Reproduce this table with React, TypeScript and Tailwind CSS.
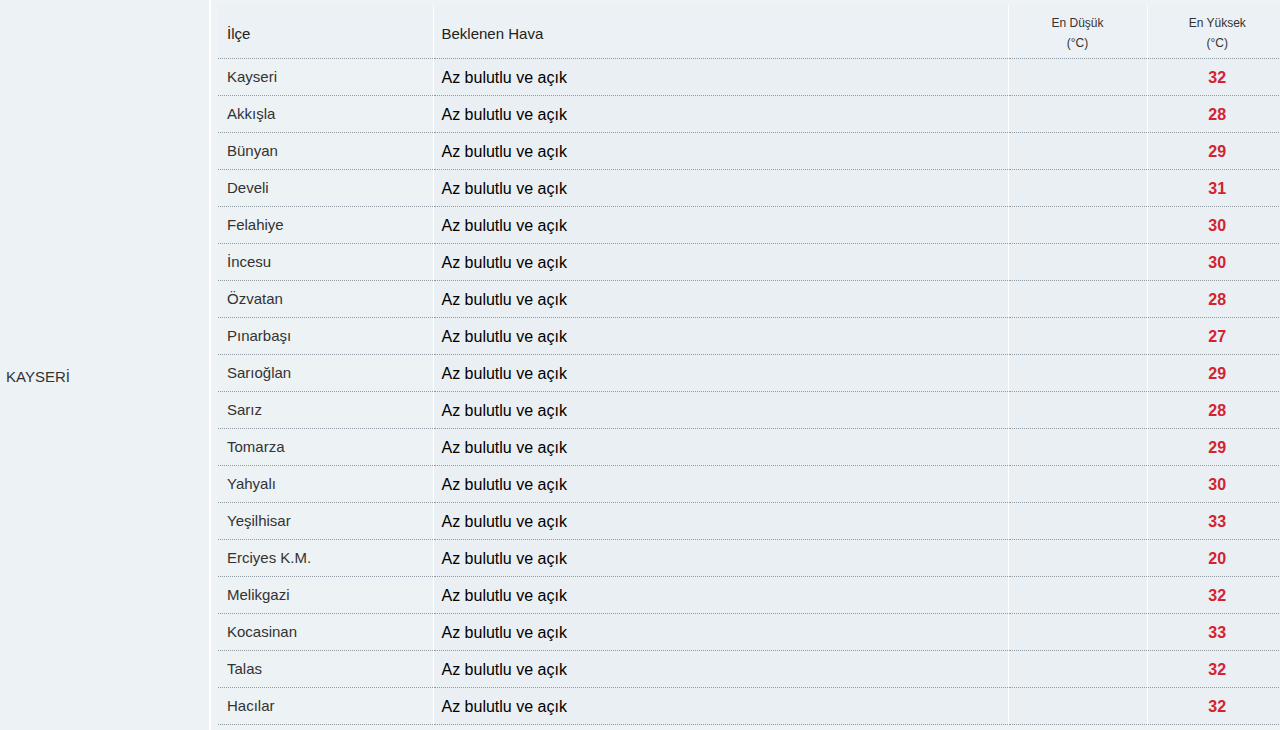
import React from 'react'

const rows: [string, number][] = [
  ['Kayseri', 32],
  ['Akkışla', 28],
  ['Bünyan', 29],
  ['Develi', 31],
  ['Felahiye', 30],
  ['İncesu', 30],
  ['Özvatan', 28],
  ['Pınarbaşı', 27],
  ['Sarıoğlan', 29],
  ['Sarız', 28],
  ['Tomarza', 29],
  ['Yahyalı', 30],
  ['Yeşilhisar', 33],
  ['Erciyes K.M.', 20],
  ['Melikgazi', 32],
  ['Kocasinan', 33],
  ['Talas', 32],
  ['Hacılar', 32],
]

export default function App() {
  return (
    <div className="flex h-[730px] w-[1280px] overflow-hidden bg-[#edf2f5] font-['Liberation_Sans',sans-serif] text-[15px]">
      <div className="flex w-[211px] shrink-0 items-center border-r-2 border-white pl-[6px] pt-[24px] text-[#333]">
        KAYSERİ
      </div>
      <div className="flex-1 bg-[#eef3f6] pl-[7px] pt-[5px]">
        <table className="w-[1069px] table-fixed border-collapse bg-[#e9eff3]">
          <colgroup>
            <col className="w-[215px]" />
            <col className="w-[575px]" />
            <col className="w-[139px]" />
            <col className="w-[140px]" />
          </colgroup>
          <thead>
            <tr className="h-[53px] border-b border-dotted border-[#8f9aa3] bg-[#ebf1f4]">
              <th className="border-r border-white pl-[9px] pt-[5px] text-left font-normal text-[#222]">İlçe</th>
              <th className="border-r border-white pl-[8px] pt-[5px] text-left font-normal text-[#222]">Beklenen Hava</th>
              <th className="border-r border-white pt-[4px] text-center align-top text-[12px] leading-[20px] font-normal text-[#333]">
                <div className="pt-[4px]">En Düşük</div>
                <div>(°C)</div>
              </th>
              <th className="pt-[4px] text-center align-top text-[12px] leading-[20px] font-normal text-[#333]">
                <div className="pt-[4px]">En Yüksek</div>
                <div>(°C)</div>
              </th>
            </tr>
          </thead>
          <tbody>
            {rows.map(([name, high]) => (
              <tr key={name} className="h-[37px] border-b border-dotted border-[#8f9aa3]">
                <td className="border-r border-white bg-[#edf2f5] pl-[9px] pt-[2px] text-[#333]">{name}</td>
                <td className="border-r border-white pl-[8px] pt-[2px] text-[16px] text-black">Az bulutlu ve açık</td>
                <td className="border-r border-white"></td>
                <td className="pt-[2px] text-center text-[16px] font-bold text-[#d3232f]">{high}</td>
              </tr>
            ))}
          </tbody>
        </table>
      </div>
    </div>
  )
}
